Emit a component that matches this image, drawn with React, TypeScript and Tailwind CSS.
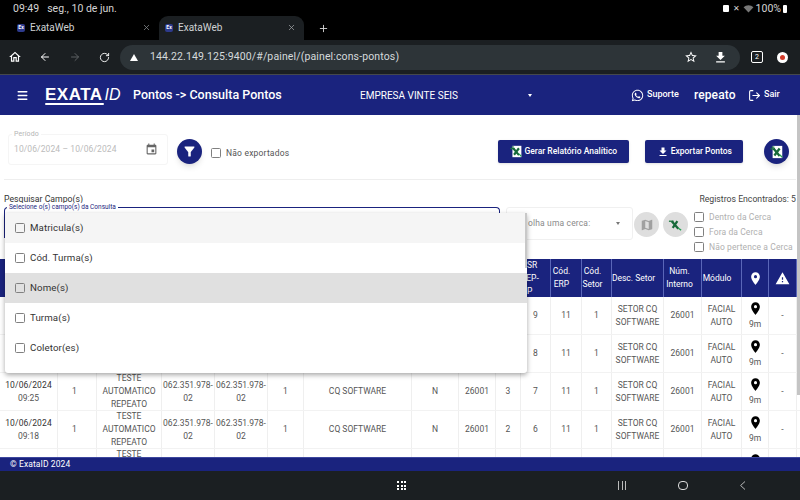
import { ArrowLeft, ArrowRight, LogOut, Menu, Plus, RotateCw, X } from "lucide-react";
import { FaWhatsapp } from "react-icons/fa";

const columns = [
    "w-[58px]", "w-[39px]", "w-[65px]", "w-[53px]", "w-[53px]", "w-[36px]", "w-[108px]", "w-[47px]",
    "w-[37px]", "w-[25px]", "w-[30px]", "w-[31px]", "w-[30px]", "w-[52px]", "w-[38px]", "w-[40px]", "w-[27px]", "w-[28px]",
];

const rows = [
    { date: "09:41", a: "5", b: "9" },
    { date: "09:33", a: "4", b: "8" },
    { date: "09:25", a: "3", b: "7" },
    { date: "09:18", a: "2", b: "6" },
    { date: "09:10", a: "1", b: "5" },
];

const fields = ["Matricula(s)", "Cód. Turma(s)", "Nome(s)", "Turma(s)", "Coletor(es)"];

const pinPath = "M12 2C8.13 2 5 5.13 5 9c0 5.25 7 13 7 13s7-7.75 7-13c0-3.87-3.13-7-7-7zm0 9.5a2.5 2.5 0 0 1 0-5 2.5 2.5 0 0 1 0 5z";
const downloadPath = "M5 20h14v-2H5v2zM19 9h-4V3H9v6H5l7 7 7-7z";

function Glyph({ d, className }: { d: string; className?: string }) {
    return (
        <svg viewBox="0 0 24 24" fill="currentColor" className={className}>
            <path d={d} />
        </svg>
    );
}

function ExcelIcon({ className }: { className?: string }) {
    return (
        <svg viewBox="0 0 16 16" className={className}>
            <rect x="3" y="1" width="11" height="14" fill="#fff" />
            <path d="M0.5 4.5h5M2 2.5h3" stroke="#1b7a3d" strokeWidth="1.4" />
            <path d="M4 4l7 8.5M11 4l-6 8" stroke="#17693a" strokeWidth="2.6" />
            <path d="M11 11l3 3" stroke="#22a050" strokeWidth="1.5" />
        </svg>
    );
}

function Favicon() {
    return (
        <div className="w-[8px] h-[8px] rounded-[2px] bg-[#2d3a8c] mr-[5px] flex items-center justify-center text-[5px] leading-none text-white font-bold">
            Ex
        </div>
    );
}

function Logo() {
    return (
        <div className="relative w-[80px] h-[18px] text-white leading-[18px] flex items-baseline font-['Liberation_Sans',sans-serif]">
            <span className="font-bold text-[17px] tracking-[0.5px]">EXATA</span>
            <span className="italic text-[16px] ml-[2px]">ID</span>
            <div className="absolute left-0 bottom-[-1px] w-[59px] h-[2px] bg-white rounded-full" />
        </div>
    );
}

function CheckBox() {
    return <div className="w-[10px] h-[10px] border border-[#808080] rounded-[1.5px] shrink-0" />;
}

function HeaderCell({ children, className = "" }: { children?: React.ReactNode; className?: string }) {
    return (
        <div className={`${className} h-full shrink-0 flex items-center justify-center text-center leading-[13px] text-[8.5px] text-white border-r border-[#5a66b8]`}>
            {children}
        </div>
    );
}

function Cell({ children, i, className = "" }: { children?: React.ReactNode; i: number; className?: string }) {
    return (
        <div className={`${columns[i]} ${className} h-full shrink-0 flex flex-col items-center justify-center text-center leading-[13px] text-[8.5px] text-[#555] border-r border-[#efefef]`}>
            {children}
        </div>
    );
}

function Row({ date, a, b }: { date: string; a: string; b: string }) {
    return (
        <div className="flex h-[38px] shrink-0 border-b border-[#f2f2f2]">
            <Cell i={0}>
                <span className="text-[#333] tracking-[0.15px]">10/06/2024</span>
                <span>{date}</span>
            </Cell>
            <Cell i={1} className="pr-[5px]">1</Cell>
            <Cell i={2}>
                <span>TESTE</span>
                <span>AUTOMATICO</span>
                <span>REPEATO</span>
            </Cell>
            <Cell i={3}>062.351.978-02</Cell>
            <Cell i={4}>062.351.978-02</Cell>
            <Cell i={5}>1</Cell>
            <Cell i={6}>CQ SOFTWARE</Cell>
            <Cell i={7}>N</Cell>
            <Cell i={8}>26001</Cell>
            <Cell i={9}>{a}</Cell>
            <Cell i={10}>{b}</Cell>
            <Cell i={11}>11</Cell>
            <Cell i={12}>1</Cell>
            <Cell i={13}>SETOR CQ SOFTWARE</Cell>
            <Cell i={14}>26001</Cell>
            <Cell i={15}>FACIAL AUTO</Cell>
            <Cell i={16}>
                <Glyph d={pinPath} className="w-[15px] h-[15px] text-black" />
                <span className="mt-[2px]">9m</span>
            </Cell>
            <Cell i={17}>-</Cell>
        </div>
    );
}

export default function App() {
    return (
        <div className="w-[800px] h-[500px] overflow-hidden flex flex-col bg-white font-['Roboto',sans-serif]">
            {/* status bar */}
            <div className="h-[16px] shrink-0 bg-black text-[#d5d5d5] text-[10.5px] flex items-center pl-[13px] pr-[13px] pt-[1px]">
                <span>09:49</span>
                <span className="ml-[8px]">seg., 10 de jun.</span>
                <div className="w-[6px] h-[7px] ml-auto bg-white rounded-[1px]" />
                <span className="text-[8px] ml-[4px]">✕</span>
                <svg viewBox="0 0 12 10" className="w-[11px] h-[9px] ml-[3px]">
                    <path d="M0.5 3.5a8 8 0 0 1 11 0L6 9.5z" fill="#777" />
                </svg>
                <span className="ml-[2px]">100%</span>
                <div className="w-[4px] h-[8px] ml-[2px] bg-white rounded-[1px]" />
            </div>

            {/* tabs */}
            <div className="h-[24px] shrink-0 bg-black flex items-stretch text-[#cfd2d4] text-[10px]">
                <div className="w-[159px] flex items-center pl-[17px] pr-[8px] pb-[1px]">
                    <Favicon />
                    <span>ExataWeb</span>
                    <X className="w-[9px] h-[9px] ml-auto text-[#8a8d90]" />
                </div>
                <div className="w-[145px] flex items-center pl-[6px] pr-[8px] pb-[1px] bg-[#1b1f22] rounded-t-[9px]">
                    <Favicon />
                    <span>ExataWeb</span>
                    <X className="w-[9px] h-[9px] ml-auto text-[#a0a3a6]" />
                </div>
                <div className="flex items-center ml-[14px]">
                    <Plus className="w-[11px] h-[11px] text-[#d5d5d5]" />
                </div>
            </div>

            {/* toolbar */}
            <div className="h-[35px] shrink-0 bg-[#1b1f22] border-b border-[#45484c] flex items-center text-white">
                <Glyph d="M12 5.69l5 4.5V18h-2v-6H9v6H7v-7.81l5-4.5M12 3L2 12h3v8h6v-6h2v6h6v-8h3L12 3z" className="w-[14px] h-[14px] ml-[8px]" />
                <ArrowLeft className="w-[12px] h-[12px] ml-[17px]" />
                <ArrowRight className="w-[12px] h-[12px] ml-[18px] text-[#5d6063]" />
                <RotateCw className="w-[11px] h-[11px] ml-[18px]" />
                <div className="w-[620px] h-[25px] ml-[10px] rounded-full bg-[#2d3438] flex items-center pl-[10px] pr-[12px]">
                    <div className="w-0 h-0 border-l-[4px] border-r-[4px] border-b-[7px] border-l-transparent border-r-transparent border-b-white" />
                    <span className="ml-[12px] text-[10.5px] tracking-[0.13px] text-[#d5dadc]">144.22.149.125:9400/#/painel/(painel:cons-pontos)</span>
                    <Glyph d="M22 9.24l-7.19-.62L12 2 9.19 8.63 2 9.24l5.46 4.73L5.82 21 12 17.27 18.18 21l-1.63-7.03L22 9.24zM12 15.4l-3.76 2.27 1-4.28-3.32-2.88 4.38-.38L12 6.1l1.71 4.04 4.38.38-3.32 2.88 1 4.28L12 15.4z" className="w-[14px] h-[14px] ml-auto" />
                    <Glyph d={downloadPath} className="w-[15px] h-[15px] ml-[15px]" />
                </div>
                <div className="w-[12px] h-[12px] ml-[11px] border border-white rounded-[2px] text-[7px] flex items-center justify-center">2</div>
                <div className="w-[11px] h-[11px] ml-[14px] rounded-full bg-white flex items-center justify-center">
                    <div className="w-[5px] h-[5px] rounded-full bg-[#d23a2a]" />
                </div>
            </div>

            {/* app header */}
            <div className="h-[40px] shrink-0 bg-[#1a237e] flex items-center text-white">
                <Menu className="w-[13px] h-[13px] ml-[16px] stroke-[2.5]" />
                <div className="ml-[16px]">
                    <Logo />
                </div>
                <span className="ml-[8px] w-[149px] text-[12.5px] font-medium whitespace-nowrap">Pontos -&gt; Consulta Pontos</span>
                <span className="ml-[78px] w-[98px] text-[10px] whitespace-nowrap">EMPRESA VINTE SEIS</span>
                <div className="ml-[70px] w-0 h-0 border-l-[2.5px] border-r-[2.5px] border-t-[3px] border-l-transparent border-r-transparent border-t-white" />
                <FaWhatsapp className="w-[13px] h-[13px] ml-[99px]" />
                <span className="ml-[3px] w-[30px] text-[9px] font-medium">Suporte</span>
                <span className="ml-[17px] w-[42px] text-[12px] font-medium tracking-[0.1px]">repeato</span>
                <LogOut className="w-[13px] h-[13px] ml-[12px]" />
                <span className="ml-[3px] text-[9px] font-medium">Sair</span>
            </div>

            {/* content */}
            <div className="relative flex-1 min-h-0 overflow-hidden flex flex-col">
                <div className="h-[65px] shrink-0 mx-[4px] border-b border-[#eeeeee] flex items-start relative">
                    <div className="relative mt-[19px] ml-[4px] w-[160px] h-[31px] border border-[#f5f5f5] rounded-[3px] flex items-center pl-[5px] text-[8.5px] text-[#bbbbbb] tracking-[0.1px]">
                        <span className="absolute -top-[6px] left-[3px] bg-white px-[2px] text-[7px] text-[#b5b5b5]">Período</span>
                        <span>10/06/2024 – 10/06/2024</span>
                        <Glyph d="M17 12h-5v5h5v-5zM16 1v2H8V1H6v2H5c-1.11 0-1.99.9-1.99 2L3 19c0 1.1.89 2 2 2h14c1.1 0 2-.9 2-2V5c0-1.1-.9-2-2-2h-1V1h-2zm3 18H5V8h14v11z" className="w-[13px] h-[13px] text-[#666] ml-auto mr-[9px]" />
                    </div>
                    <div className="mt-[24px] ml-[9px] w-[25px] h-[25px] rounded-full bg-[#1a237e] shadow-md flex items-center justify-center">
                        <Glyph d="M4.25 5.61C6.27 8.2 10 13 10 13v6c0 .55.45 1 1 1h2c.55 0 1-.45 1-1v-6s3.72-4.8 5.74-7.39c.51-.66.04-1.61-.79-1.61H5.04c-.83 0-1.3.95-.79 1.61z" className="w-[15px] h-[15px] text-white" />
                    </div>
                    <div className="mt-[32px] ml-[9px] flex items-center gap-[5px] text-[8.5px] text-[#555] tracking-[0.2px]">
                        <CheckBox />
                        <span>Não exportados</span>
                    </div>
                    <div className="mt-[25px] ml-[209px] w-[131px] h-[23px] rounded-[2px] bg-[#1a237e] shadow flex items-center justify-center gap-[1px] text-white text-[8.5px] font-medium">
                        <ExcelIcon className="w-[13px] h-[13px]" />
                        <span className="whitespace-nowrap">Gerar Relatório Analítico</span>
                    </div>
                    <div className="mt-[25px] ml-[16px] w-[98px] h-[23px] rounded-[2px] bg-[#1a237e] shadow flex items-center justify-center gap-[2px] text-white text-[8.5px] font-medium">
                        <Glyph d={downloadPath} className="w-[12px] h-[12px]" />
                        <span className="whitespace-nowrap">Exportar Pontos</span>
                    </div>
                    <div className="mt-[24px] ml-[21px] w-[25px] h-[25px] rounded-full bg-[#1a237e] shadow-md flex items-center justify-center">
                        <ExcelIcon className="w-[14px] h-[14px]" />
                    </div>
                </div>

                <div className="h-[79px] shrink-0 relative flex">
                    <div className="w-[500px] pl-[4px] pt-[13px] text-[8.7px] text-[#333]">
                        <span className="block leading-[12px]">Pesquisar Campo(s)</span>
                    </div>
                    <div className="mt-[27px] ml-[6px] w-[127px] h-[33px] border border-[#f0f0f0] rounded-[3px] flex items-center pl-[21px] text-[8.5px] text-[#8a8a8a] tracking-[0.15px]">
                        <span>olha uma cerca:</span>
                        <div className="ml-auto mr-[12px] w-0 h-0 border-l-[2.5px] border-r-[2.5px] border-t-[3px] border-l-transparent border-r-transparent border-t-[#777]" />
                    </div>
                    <div className="mt-[32px] ml-[1px] w-[25px] h-[25px] rounded-full bg-[#dedede] flex items-center justify-center">
                        <Glyph d="M20.5 3l-.16.03L15 5.1 9 3 3.36 4.9c-.21.07-.36.25-.36.48V20.5c0 .28.22.5.5.5l.16-.03L9 18.9l6 2.1 5.64-1.9c.21-.07.36-.25.36-.48V3.5c0-.28-.22-.5-.5-.5zM15 19l-6-2.11V5l6 2.11V19z" className="w-[14px] h-[14px] text-[#a0a0a0]" />
                    </div>
                    <div className="mt-[32px] ml-[4px] w-[25px] h-[25px] rounded-full bg-[#dedede] flex items-center justify-center">
                        <svg viewBox="0 0 16 16" className="w-[15px] h-[15px]">
                            <path d="M1 4.5h5" stroke="#1b7a3d" strokeWidth="1.4" />
                            <path d="M4 4.5l7 8M10 4.5l-5 7" stroke="#17693a" strokeWidth="2.4" />
                            <path d="M11 12l3 2" stroke="#22a050" strokeWidth="1.5" />
                        </svg>
                    </div>
                    <div className="ml-[6px] flex-1 relative text-[8.5px] text-[#b0b0b0]">
                        <div className="absolute right-[4px] top-[13px] text-[8.7px] text-[#444] whitespace-nowrap">Registros Encontrados: 5</div>
                        <div className="pt-[32px] flex flex-col gap-[5px] leading-[10px] tracking-[0.1px]">
                            <div className="flex items-center gap-[5px]"><CheckBox /><span>Dentro da Cerca</span></div>
                            <div className="flex items-center gap-[5px]"><CheckBox /><span>Fora da Cerca</span></div>
                            <div className="flex items-center gap-[5px] whitespace-nowrap"><CheckBox /><span>Não pertence a Cerca</span></div>
                        </div>
                    </div>
                </div>

                {/* table */}
                <div className="flex h-[38px] shrink-0 bg-[#1a237e]">
                    <HeaderCell className={columns[0]}>Data/Hora</HeaderCell>
                    <HeaderCell className={columns[1]}>Cód.</HeaderCell>
                    <HeaderCell className={columns[2]}>Nome</HeaderCell>
                    <HeaderCell className={columns[3]}>CPF</HeaderCell>
                    <HeaderCell className={columns[4]}>PIS</HeaderCell>
                    <HeaderCell className={columns[5]}>Turma</HeaderCell>
                    <HeaderCell className={columns[6]}>Empresa</HeaderCell>
                    <HeaderCell className={columns[7]}>Exp.</HeaderCell>
                    <HeaderCell className={columns[8]}>REP</HeaderCell>
                    <HeaderCell className={columns[9]}>NSR</HeaderCell>
                    <HeaderCell className={columns[10]}>
                        <div className="w-full text-left">
                            <div>NSR</div>
                            <div>REP-</div>
                            <div className="pl-[6px]">P</div>
                        </div>
                    </HeaderCell>
                    <HeaderCell className={`${columns[11]} pr-[9px]`}>Cód.<br />ERP</HeaderCell>
                    <HeaderCell className={`${columns[12]} pr-[8px]`}>Cód.<br />Setor</HeaderCell>
                    <HeaderCell className={`${columns[13]} pr-[8px] whitespace-nowrap`}>Desc. Setor</HeaderCell>
                    <HeaderCell className={`${columns[14]} pr-[6px]`}>Núm.<br />Interno</HeaderCell>
                    <HeaderCell className={`${columns[15]} pr-[9px]`}>Módulo</HeaderCell>
                    <HeaderCell className={columns[16]}>
                        <Glyph d={pinPath} className="w-[15px] h-[15px] text-white" />
                    </HeaderCell>
                    <HeaderCell className={columns[17]}>
                        <Glyph d="M1 21h22L12 2 1 21zm12-3h-2v-2h2v2zm0-4h-2v-4h2v4z" className="w-[15px] h-[15px] text-white" />
                    </HeaderCell>
                </div>
                <div className="flex-1 min-h-0 overflow-hidden flex flex-col">
                    {rows.map((row) => (
                        <Row key={row.date} {...row} />
                    ))}
                </div>

                {/* scrollbar */}
                <div className="absolute right-0 top-0 w-[3px] h-[280px] bg-[#c4c4c4]" />

                {/* campo select */}
                <div className="absolute left-[4px] top-[92px] w-[496px] h-[31px] border-t-[1.5px] border-x-[1.5px] border-[#1a237e] rounded-t-[4px]">
                    <span className="absolute -top-[5px] left-[2px] bg-white px-[2px] text-[6.5px] leading-[8px] text-[#1a237e]">Selecione o(s) campo(s) da Consulta</span>
                </div>
                <div className="absolute left-[4px] top-[147px] w-[1.5px] h-[35px] bg-[#1a237e]" />
                <div className="absolute left-[5px] top-[98px] w-[522px] h-[160px] bg-white shadow-[0_2px_5px_rgba(0,0,0,0.35)] rounded-b-[3px] flex flex-col">
                    {fields.map((field, i) => (
                        <div
                            key={field}
                            className={`h-[30px] shrink-0 flex items-center pl-[10px] gap-[5px] text-[9.7px] text-[#333] tracking-[0.1px] ${i === 0 ? "bg-[#f5f5f5]" : ""} ${i === 2 ? "bg-[#e0e0e0]" : ""}`}
                        >
                            <CheckBox />
                            <span>{field}</span>
                        </div>
                    ))}
                    <div className="absolute right-0 top-0 w-[2px] h-[55px] bg-[#c8c8c8]" />
                </div>
            </div>

            {/* footer */}
            <div className="h-[14px] shrink-0 bg-[#1a237e] border-t border-[#3d479e] flex items-center pl-[10px] text-[8.5px] tracking-[0.1px] text-white pb-[1px]">
                © ExataID 2024
            </div>

            {/* android nav */}
            <div className="h-[29px] shrink-0 bg-[#1b1f22] flex items-center text-[#d5d5d5]">
                <div className="ml-[397px] grid grid-cols-3 gap-[1.5px]">
                    {Array.from({ length: 9 }).map((_, i) => (
                        <div key={i} className="w-[2px] h-[2px] bg-white" />
                    ))}
                </div>
                <div className="ml-[212px] flex gap-[2.5px]">
                    <div className="w-[1px] h-[9px] bg-[#bbb]" />
                    <div className="w-[1px] h-[9px] bg-[#bbb]" />
                    <div className="w-[1px] h-[9px] bg-[#bbb]" />
                </div>
                <div className="ml-[52px] w-[10px] h-[9px] border border-[#ddd] rounded-[4px]" />
                <svg viewBox="0 0 10 12" className="ml-[51px] w-[8px] h-[11px]">
                    <path d="M7.5 1L2 6l5.5 5" fill="none" stroke="#ddd" strokeWidth="1" />
                </svg>
            </div>
        </div>
    );
}
